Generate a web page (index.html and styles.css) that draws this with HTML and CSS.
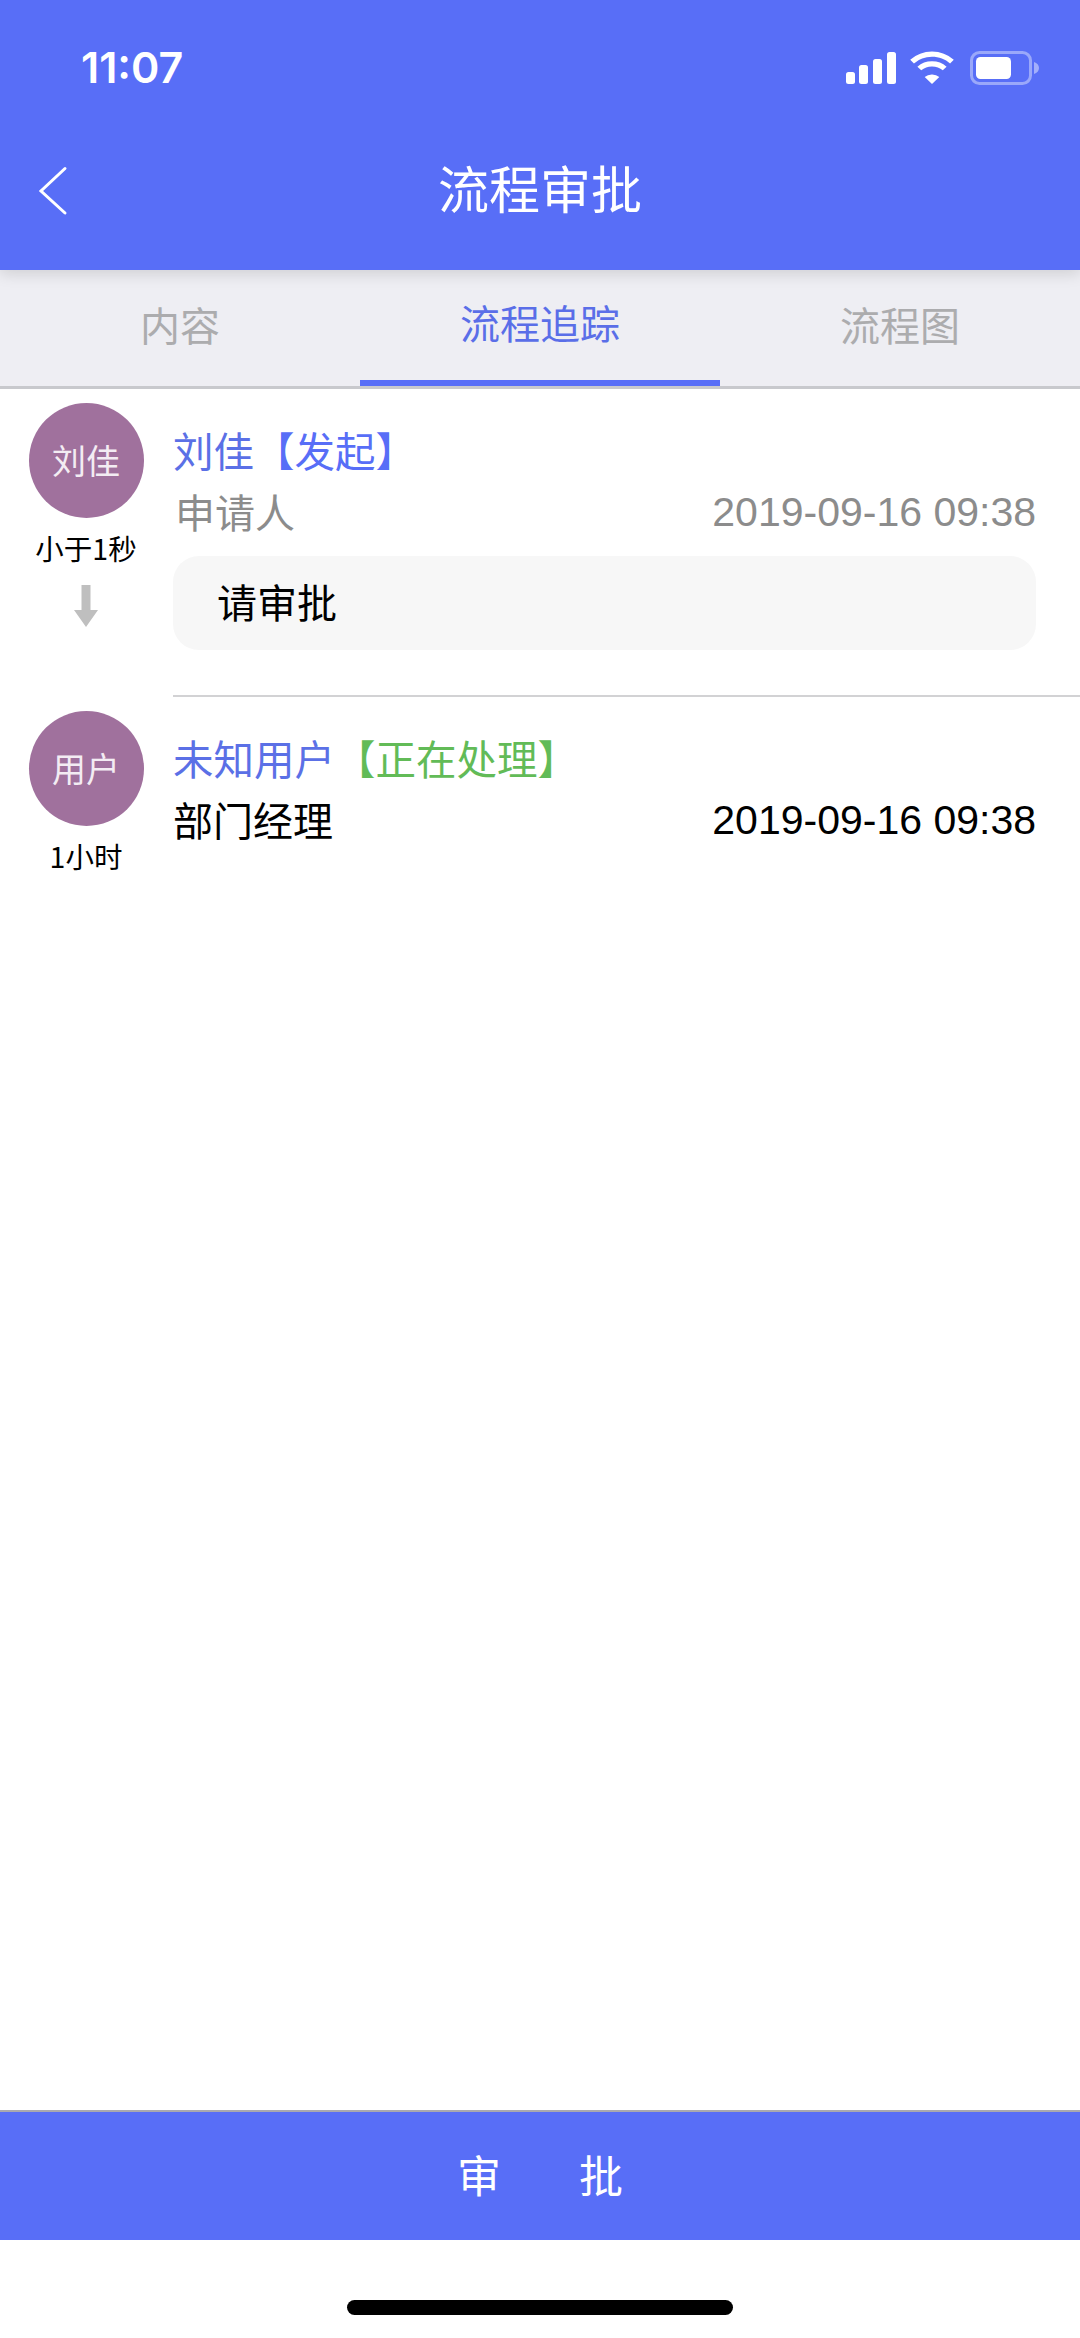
FILE: index.html
```html
<!DOCTYPE html>
<html lang="zh">
<head>
<meta charset="utf-8">
<title>流程审批</title>
<link rel="stylesheet" href="styles.css">
</head>
<body>
<div class="page">
  <header class="header">
    <div class="status">
      <span class="time">11:07</span>
      <div class="status-icons">
        <svg class="signal" width="50" height="32" viewBox="0 0 50 32"><rect x="0" y="20" width="9" height="12" rx="2.5"/><rect x="13" y="13" width="9" height="19" rx="2.5"/><rect x="27" y="7" width="9" height="25" rx="2.5"/><rect x="41" y="0" width="9" height="32" rx="2.5"/></svg>
        <svg class="wifi" width="44" height="33" viewBox="3 1 38 31" preserveAspectRatio="none"><path d="M22 6.500c6 0 11.500 2.300 15.600 6.200l3.200-3.400A27.300 27.300 0 0 0 22 1.500 27.300 27.300 0 0 0 3.200 9.300l3.200 3.400A22.500 22.500 0 0 1 22 6.500z"/><path d="M22 15.500c3.600 0 6.900 1.400 9.300 3.600l3.300-3.400A18 18 0 0 0 22 10.600a18 18 0 0 0-12.600 5.100l3.300 3.400a13.600 13.600 0 0 1 9.300-3.600z"/><path d="M22 32l6.300-6.600A9 9 0 0 0 22 23a9 9 0 0 0-6.300 2.400z"/></svg>
        <svg class="battery" width="70" height="34" viewBox="0 0 70 34"><rect x="1.500" y="1.500" width="59" height="31" rx="8" fill="none" stroke="#fff" stroke-opacity=".4" stroke-width="3"/><rect x="6" y="6" width="35" height="22" rx="4.500" fill="#fff"/><path d="M64 11c3 1 5 3 5 6s-2 5-5 6z" fill="#fff" fill-opacity=".45"/></svg>
      </div>
    </div>
    <div class="navbar">
      <svg class="back" width="32" height="50" viewBox="0 0 32 50"><path d="M29 2.500 5 25l24 22" fill="none" stroke="#fff" stroke-width="3" stroke-linecap="round" stroke-linejoin="miter"/></svg>
      <h1 class="title">流程审批</h1>
    </div>
  </header>

  <nav class="tabs">
    <a class="tab">内容</a>
    <a class="tab tab-active">流程追踪</a>
    <a class="tab">流程图</a>
  </nav>

  <main class="list">
    <section class="item">
      <div class="side">
        <div class="avatar">刘佳</div>
        <div class="elapsed">小于1秒</div>
        <svg class="arrow" width="24" height="42" viewBox="0 0 24 42"><path d="M7.500 0h9v25H24L12 42 0 25h7.500z" fill="#bfbfbf"/></svg>
      </div>
      <div class="body body-first">
        <div class="name"><span class="blue">刘佳</span><span class="blue-strong">【发起】</span></div>
        <div class="meta meta-gray"><span class="role">申请人</span><span class="date">2019-09-16 09:38</span></div>
        <div class="comment">请审批</div>
      </div>
    </section>
    <section class="item item-second">
      <div class="side">
        <div class="avatar">用户</div>
        <div class="elapsed">1小时</div>
      </div>
      <div class="body">
        <div class="name"><span class="blue">未知用户</span><span class="green">【正在处理】</span></div>
        <div class="meta"><span>部门经理</span><span class="date">2019-09-16 09:38</span></div>
      </div>
    </section>
  </main>

  <footer class="footer">
    <button class="approve"><span>审</span><span>批</span></button>
    <div class="home-wrap"><div class="home"></div></div>
  </footer>
</div>
</body>
</html>
```

FILE: styles.css
```css
* { box-sizing: border-box; }
html, body { margin: 0; padding: 0; background: #fff; }
body { font-family: "Liberation Sans", "Noto Sans CJK SC", sans-serif; }
.page { width: 1080px; height: 2338px; display: flex; flex-direction: column; overflow: hidden; }

.header { height: 270px; background: #586ef7; color: #fff; display: flex; flex-direction: column; position: relative; z-index: 2; box-shadow: 0 4px 14px rgba(0,0,0,.13); }
.status { height: 130px; display: flex; align-items: flex-start; justify-content: space-between; padding: 47px 40px 0 81px; }
.time { font-family: "Inter", sans-serif; font-weight: 600; font-size: 43px; line-height: 40px; }
.status-icons { display: flex; align-items: flex-start; gap: 14px; margin-top: 4px; }
.signal, .wifi { fill: #fff; }
.signal { margin-top: 1px; }
.wifi { margin-right: 2px; }
.navbar { flex: 1; display: flex; align-items: flex-start; justify-content: center; position: relative; padding-top: 26px; }
.back { position: absolute; left: 36px; top: 36px; }
.title { margin: 0; font-family: "Noto Sans CJK SC", sans-serif; font-weight: 400; font-size: 51px; line-height: 62px; }

.tabs { height: 119px; background: #eeeef3; display: grid; grid-template-columns: repeat(3, 1fr); border-bottom: 3px solid #c8c9cd; font-family: "Noto Sans CJK SC", sans-serif; }
.tab { display: flex; align-items: center; justify-content: center; font-size: 40px; color: #acacae; padding-bottom: 12px; margin-bottom: -3px; }
.tab-active { color: #5a6ee8; border-bottom: 6px solid #586ef7; height: 116px; margin-bottom: 0; padding-bottom: 6px; }

.list { flex: 1; font-family: "Noto Sans CJK SC", sans-serif; }
.item { display: flex; }
.side { width: 173px; flex: none; display: flex; flex-direction: column; align-items: center; padding-top: 14px; padding-right: 1px; }
.avatar { width: 115px; height: 115px; border-radius: 50%; background: #a0719d; color: #f3ecf3; display: flex; align-items: center; justify-content: center; font-size: 34px; padding-bottom: 3px; }
.elapsed { font-size: 28.500px; line-height: 34px; margin-top: 13px; color: #000; }
.arrow { margin-top: 20px; }
.body { flex: 1; padding-top: 38px; padding-right: 44px; }
.body-first { padding-bottom: 45px; border-bottom: 2px solid #d2d2d4; }
.name { font-size: 40.500px; line-height: 46px; white-space: nowrap; }
.blue { color: #5b70e6; }
.blue-strong { color: #586ef7; }
.green { color: #62bb57; }
.meta { display: flex; justify-content: space-between; align-items: center; height: 60px; font-size: 40px; line-height: 60px; margin-top: 8px; color: #000; }
.meta-gray { color: #8c8c8c; }
.role { margin-left: 2px; }
.date { font-family: "Liberation Sans", sans-serif; font-size: 41px; line-height: 58px; padding-top: 2px; }
.comment { margin-top: 15px; height: 94px; background: #f7f7f7; border-radius: 26px; padding-left: 44px; font-size: 40px; line-height: 90px; color: #000; }

.footer { flex: none; }
.approve { width: 100%; height: 130px; border: 0; border-top: 2px solid #a9a9b0; background: #586ef7; color: #fff; display: flex; align-items: center; justify-content: center; gap: 78px; font-family: "Noto Sans CJK SC", sans-serif; font-size: 44px; padding: 0 0 4px; }
.home-wrap { height: 98px; display: flex; justify-content: center; padding-top: 60px; }
.home { width: 386px; height: 15px; border-radius: 8px; background: #000; }
```
